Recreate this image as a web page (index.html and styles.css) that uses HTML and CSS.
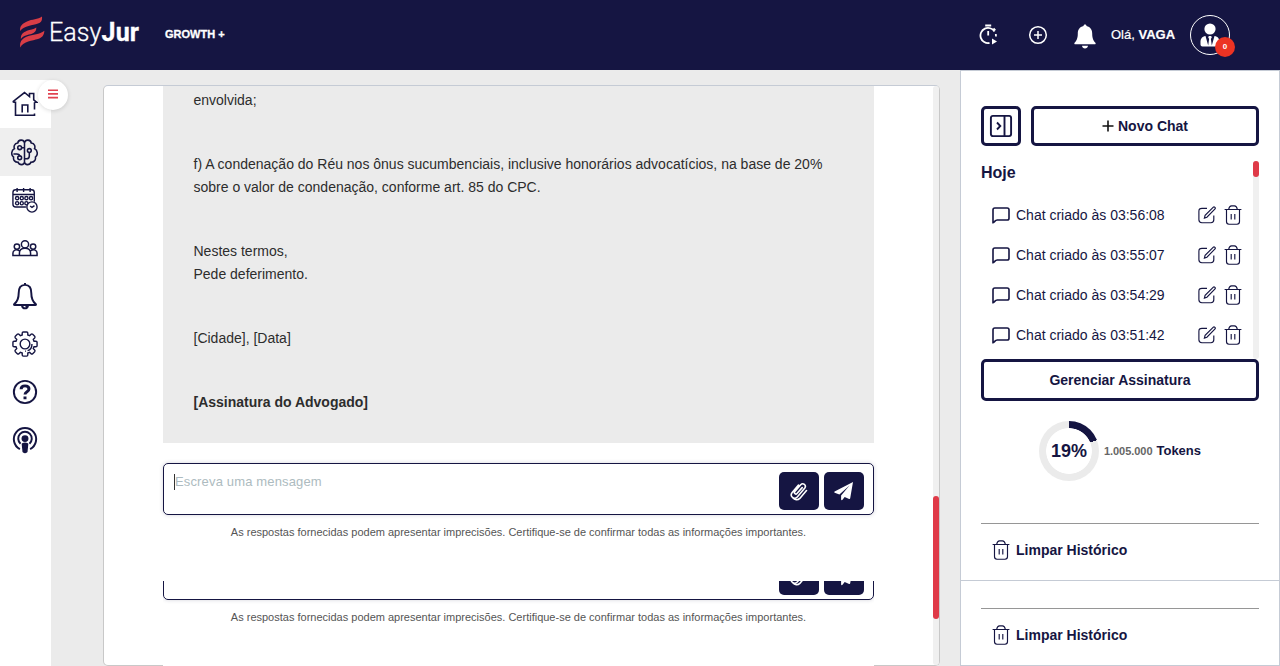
FILE: index.html
```html
<!DOCTYPE html>
<html lang="pt-BR">
<head>
<meta charset="utf-8">
<title>EasyJur</title>
<link rel="stylesheet" href="styles.css">
</head>
<body>
<svg class="defs" width="0" height="0">
  <defs>
    <symbol id="trash" viewBox="0 0 18 20"><path d="M.6 4.500h16.800M4.600 4.500C5.200 1.800 6 .8 7.500 .8h3c1.500 0 2.300 1 2.900 3.700M2.500 4.800v11.700c0 1.900.7 2.700 2.500 2.700h8c1.800 0 2.500-.8 2.500-2.700V4.800M7.200 9v5.500M10.800 9v5.500"/></symbol>
    <symbol id="edit" viewBox="0 0 18 18"><path d="M9 2.300H4C1.800 2.300.9 3.100.9 5.300v8.500c0 2.100.9 2.900 3 2.900h9c2.100 0 2.900-.8 2.900-2.900V9.500"/><path class="pen" d="M6.400 12.100l.7-2.800 8-8c.6-.6 1.300-.5 1.800 0s.5 1.200-.1 1.800l-7.900 8.100z"/></symbol>
    <symbol id="bubble" viewBox="0 0 18 17"><path d="M1 15.700V2.800C1 1.700 1.700 1 2.800 1h12.400c1.100 0 1.800.7 1.800 1.800v8.400c0 1.100-.7 1.800-1.800 1.800H5.200c-1.100 0-1.800.6-2.500 1.400-.5.600-1 1.200-1.700 1.300z"/></symbol>
    <symbol id="clip" viewBox="0 0 18 20"><path d="M12.200 6.600L7 12.500c-1.200 1.400-3.400-.3-2.300-1.800l6-6.900c2.300-2.500 6 .4 4.100 3.200l-7.300 8.700c-3.400 3.700-8.200-.3-5.300-4.200L8.500 4M16.500 9.500l-6.700 7.900C7.600 19.500 4.500 18.800 3 17"/></symbol>
    <symbol id="plane" viewBox="0 0 20 20"><path d="M19 1L.6 10.500c-.5.400-.4.900.1 1.200l4.700 1.900L15.500 4.500 7.100 14.600v3.700c0 .9.9 1.100 1.400.5l2.200-2.700 4.400 1.800c.6.200 1-.1 1.100-.6z"/></symbol>
  </defs>
</svg>

<header class="topbar">
  <div class="brand">
    <svg class="brand-mark" width="25" height="32" viewBox="0 0 25 32"><path d="M.2 15C-.5 10 2.500 7.500 7 5.500 12 3.300 18 3.500 22 .6c.4 3.800-.7 5.700-4 7C12.500 9.800 4.500 9.500.2 15zM.9 23C.5 18.500 3 16.500 7 14.700c3-1.300 6.500-1 9.300-3.200.2 3.200-1.300 5.200-4.300 6.200C8 19 3.500 19 .9 23zM.3 31.500C-.7 26 2 22.500 7 20.500c6-2.400 12.500-1.800 17.400-5.800-.3 4.600-2.400 7-6.400 8.300C12.500 24.800 3.500 25 .3 31.500z"/></svg>
    <span class="brand-name">Easy<b>Jur</b></span>
  </div>
  <span class="plan">GROWTH +</span>
  <div class="top-actions">
    <svg class="timer" width="20" height="22" viewBox="0 0 20 22"><path d="M6.200 1.500h6M15.500 7.500A7.600 7.600 0 1 0 10.500 19M9.200 7v4.500M14.500 4.500l1.800 1.800M16.800 10l.2 2.500"/><path class="solid" d="M13 14.500l5 3-5 3z"/></svg>
    <svg class="add" width="20" height="20" viewBox="0 0 20 20"><circle cx="10" cy="10" r="8.300"/><path d="M10 6v8M6 10h8"/></svg>
    <svg class="bell" width="22" height="25" viewBox="0 0 22 25"><path d="M11 .5c-1 0-1.500.7-1.500 1.600C5.600 3 3.800 5.700 3.800 9.600c0 5-1.300 7.300-3.200 9.200-.6.800-.2 1.500.7 1.500h19.400c.9 0 1.300-.7.700-1.500-1.900-1.900-3.200-4.200-3.200-9.200 0-3.900-1.800-6.600-5.700-7.500 0-.9-.5-1.600-1.500-1.600zM8 21.700h6c-.3 1.800-1.400 2.800-3 2.800s-2.700-1-3-2.800z"/></svg>
    <span class="hello">Olá, <b>VAGA</b></span>
    <div class="avatar">
      <svg width="20" height="24" viewBox="0 0 20 24"><circle cx="10" cy="6" r="5.600"/><path d="M5.500 13C2 13.500.5 16 .5 19v2.500c0 1.200.8 2 2 2h15c1.200 0 2-.8 2-2V19c0-3-1.500-5.500-5-6l-2.700 9.500-.9-6.500 1-2-1-1H9.100l-1 1 1 2-.9 6.500z"/></svg>
      <span class="badge">0</span>
    </div>
  </div>
</header>

<div class="workspace">
  <nav class="sidebar">
    <a class="nav-item"><svg width="26" height="26" viewBox="0 0 26 26"><path d="M1.300 11.500v-1.200L12.500 1.500l5 4V2.500h4.200v6.300l3.200 2.500h-2.400M1.300 11.300h2.200v13H22.500V22.500M22.500 18.500v-7.200M10.200 21.500v-7.500h5.600v7.500"/></svg></a>
    <a class="nav-item active"><svg width="28" height="28" viewBox="0 0 28 28"><path d="M14 4v20M14 4C13-.2 7.500.6 7 4.200 3.300 4.600 2.700 8.100 3.600 10-.2 12.100.1 17 2.700 18.700 2 22 4.400 24.200 7.200 24c1.500 3.600 6.300 3.300 6.800 0M14 4c1-4.200 6.500-3.400 7 .2 3.700.4 4.300 3.900 3.400 5.800 3.800 2.100 3.500 7 .9 8.700.7 3.300-1.700 5.500-4.500 5.300-1.500 3.600-6.300 3.300-6.800 0M13.500 9H11M2.500 15.500H6c2 0 3 .7 3 2.500M14 20.500h2c2 0 3-1 3-3V14"/><circle cx="9" cy="9" r="2"/><circle cx="9" cy="19.500" r="2"/><circle cx="19" cy="12" r="2"/></svg></a>
    <a class="nav-item"><svg class="thin" width="28" height="28" viewBox="0 0 28 28"><path d="M1 8h23M15 21.500H4c-2 0-3-1-3-3V6c0-2 1-3 3-3h17c2 0 3 1 3 3v10M5.500 1v4.500M12.500 1v4.500M19.500 1v4.500"/><circle cx="5.500" cy="12" r="1.700"/><circle cx="10.500" cy="12" r="1.700"/><circle cx="15.500" cy="12" r="1.700"/><circle cx="20.500" cy="12" r="1.700"/><circle cx="5.500" cy="17.500" r="1.700"/><circle cx="10.500" cy="17.500" r="1.700"/><circle cx="15.500" cy="17.500" r="1.700"/><circle class="paper" cx="21.500" cy="21.500" r="5.500"/><path d="M19.500 20.500l2 1.500 2.700-2"/></svg></a>
    <a class="nav-item"><svg width="28" height="28" viewBox="0 0 28 28"><circle cx="14" cy="10" r="3.900"/><circle cx="5.300" cy="12.500" r="2.900"/><circle cx="22.700" cy="12.500" r="2.900"/><path d="M8 22V19.500c0-3 2.300-5.200 6-5.200s6 2.200 6 5.200V22zM8 17c-3.900-2.300-7-.5-7 2.500V22h7M20 17c3.900-2.300 7-.5 7 2.500V22h-7"/></svg></a>
    <a class="nav-item"><svg class="bold" width="28" height="28" viewBox="0 0 28 28"><path d="M14 2c-5 0-6.800 3.500-6.800 9 0 6-1.500 9-4.700 11.700-.6.500-.4 1 .3 1h22.400c.7 0 .9-.5.3-1C22.300 20 20.800 17 20.800 11c0-5.500-1.800-9-6.800-9zM10.800 24.500c.4 2 1.500 2.800 3.200 2.800s2.800-.8 3.200-2.800M14 0v2M14.500 25.500h2"/></svg></a>
    <a class="nav-item"><svg class="thin" width="28" height="28" viewBox="0 0 28 28"><path d="M11 4.300V2.200Q11 1 12.200 1h3.600Q17 1 17 2.200v2.100l2 .8 1.500-1.500q.9-.8 1.800 0l2.100 2.100q.8.900 0 1.800L22.900 9l.8 2h2.100q1.200 0 1.200 1.200v3.600q0 1.200-1.200 1.200h-2.100l-.8 2 1.500 1.500q.8.900 0 1.800l-2.100 2.100q-.9.800-1.800 0L19 22.900l-2 .8v2.100q0 1.200-1.200 1.200h-3.600Q11 27 11 25.800v-2.100l-2-.8-1.500 1.500q-.9.800-1.800 0l-2.100-2.100q-.8-.9 0-1.800L5.100 19l-.8-2H2.200Q1 17 1 15.800v-3.600Q1 11 2.200 11h2.100l.8-2-1.500-1.500q-.8-.9 0-1.800l2.100-2.100q.9-.8 1.800 0L9 5.100z"/><circle cx="14" cy="14" r="5.200"/><path d="M21.500 14c0 4-2 6.500-4.700 7.200M15 21.700h-1"/></svg></a>
    <a class="nav-item"><svg class="bold" width="28" height="28" viewBox="0 0 28 28"><circle cx="14" cy="14" r="12"/><path class="heavy" d="M9.800 11c0-2.300 1.700-3.600 4.200-3.600s4.300 1.300 4.300 3.400c0 3-4.300 2.800-4.300 5.900M14 18.800v3"/></svg></a>
    <a class="nav-item"><svg class="bold" width="28" height="28" viewBox="0 0 28 28"><path d="M8.500 23.800a12 12 0 1 1 11 0M9.200 18a7.300 7.300 0 1 1 9.600 0"/><circle class="fill" cx="14" cy="12.500" r="2.700"/><path class="fill" d="M11.500 18.500q2.500-1.500 5 0l-.8 8q-1.700 1.500-3.400 0z"/></svg></a>
    <button class="menu-toggle"><svg width="12" height="10" viewBox="0 0 12 10"><path d="M1 1.200h10M1 4.900h10M1 8.600h10"/></svg></button>
  </nav>

  <main class="chat">
    <div class="conversation">
      <article class="message">
        <p>envolvida;</p>
        <p>f) A condenação do Réu nos ônus sucumbenciais, inclusive honorários advocatícios, na base de 20%<br>sobre o valor de condenação, conforme art. 85 do CPC.</p>
        <p>Nestes termos,<br>Pede deferimento.</p>
        <p>[Cidade], [Data]</p>
        <p><b>[Assinatura do Advogado]</b></p>
      </article>
      <section class="composer">
        <div class="input-box"><span class="placeholder">Escreva uma mensagem</span>
          <button class="send"><svg class="clip" width="18" height="20"><use href="#clip"/></svg></button>
          <button class="send"><svg class="plane" width="20" height="20"><use href="#plane"/></svg></button>
        </div>
        <p class="notice">As respostas fornecidas podem apresentar imprecisões. Certifique-se de confirmar todas as informações importantes.</p>
      </section>
      <section class="composer repeat">
        <div class="input-box">
          <button class="send"><svg class="clip" width="18" height="20"><use href="#clip"/></svg></button>
          <button class="send"><svg class="plane" width="20" height="20"><use href="#plane"/></svg></button>
        </div>
        <p class="notice">As respostas fornecidas podem apresentar imprecisões. Certifique-se de confirmar todas as informações importantes.</p>
      </section>
    </div>
    <div class="scroll"><div class="thumb"></div></div>
  </main>

  <aside class="history">
    <div class="new-row">
      <button class="box collapse"><svg width="24" height="24" viewBox="0 0 24 24"><rect x="1.900" y="1.900" width="20.200" height="20.200" rx="2"/><path d="M15.500 2v20M8 8.500l3.300 3.500L8 15.500"/></svg></button>
      <button class="box new-chat"><svg width="12" height="12" viewBox="0 0 12 12"><path d="M6 .5v11M.5 6h11"/></svg><span>Novo Chat</span></button>
    </div>
    <div class="list">
      <div class="list-body">
        <h2>Hoje</h2>
        <div class="row"><svg class="line" width="18" height="17"><use href="#bubble"/></svg><span>Chat criado às 03:56:08</span><svg class="light" width="18" height="18"><use href="#edit"/></svg><svg class="light" width="18" height="20"><use href="#trash"/></svg></div>
        <div class="row"><svg class="line" width="18" height="17"><use href="#bubble"/></svg><span>Chat criado às 03:55:07</span><svg class="light" width="18" height="18"><use href="#edit"/></svg><svg class="light" width="18" height="20"><use href="#trash"/></svg></div>
        <div class="row"><svg class="line" width="18" height="17"><use href="#bubble"/></svg><span>Chat criado às 03:54:29</span><svg class="light" width="18" height="18"><use href="#edit"/></svg><svg class="light" width="18" height="20"><use href="#trash"/></svg></div>
        <div class="row"><svg class="line" width="18" height="17"><use href="#bubble"/></svg><span>Chat criado às 03:51:42</span><svg class="light" width="18" height="18"><use href="#edit"/></svg><svg class="light" width="18" height="20"><use href="#trash"/></svg></div>
      </div>
      <div class="scroll"><div class="thumb small"></div></div>
    </div>
    <button class="box manage">Gerenciar Assinatura</button>
    <div class="usage">
      <div class="ring"><span>19%</span></div>
      <span class="amount">1.005.000</span><b class="unit">Tokens</b>
    </div>
    <div class="clear first"><svg class="light" width="18" height="20"><use href="#trash"/></svg><span>Limpar Histórico</span></div>
    <div class="clear-panel">
      <div class="clear"><svg class="light" width="18" height="20"><use href="#trash"/></svg><span>Limpar Histórico</span></div>
    </div>
  </aside>
</div>
</body>
</html>
```

FILE: styles.css
```css
* { box-sizing: border-box; }
body { margin: 0; width: 1280px; height: 666px; overflow: hidden; background: #ebebeb; color: #151542; font: 14px/22.4px "Liberation Sans", Arial, sans-serif; display: flex; flex-direction: column; }
p, h2 { margin: 0; }
button { font: inherit; color: inherit; padding: 0; }
svg { display: block; flex: none; fill: none; stroke: #151542; }
.defs { position: absolute; }

.topbar { flex: 0 0 70px; background: #151542; color: #fff; display: flex; align-items: center; padding: 0 50px 0 20px; }
.brand { display: flex; align-items: center; width: 145px; gap: 4px; }
.brand-mark { fill: #d83d46; stroke: none; margin-top: -6px; }
.brand-name { font: 25px/30px Roboto, sans-serif; font-weight: 300; letter-spacing: 0.100px; margin-top: -4px; -webkit-text-stroke: 0.300px #fff; }
.brand-name b { font-weight: 700; }
.plan { font-size: 11px; font-weight: 700; margin-top: -2px; -webkit-text-stroke: 0.300px #fff; }
.top-actions { margin-left: auto; display: flex; align-items: center; }
.timer { stroke: #fff; stroke-width: 1.800; margin-right: 29px; }
.solid { fill: #fff; stroke: none; }
.add { stroke: #fff; stroke-width: 1.500; margin-right: 26px; }
.bell { fill: #fff; stroke: none; margin-right: 15px; margin-top: 2px; }
.hello { font-size: 13px; width: 79px; white-space: nowrap; -webkit-text-stroke: 0.200px #fff; }
.avatar { position: relative; width: 40px; height: 40px; border: 1px solid #fff; border-radius: 50%; display: flex; justify-content: center; align-items: center; }
.avatar svg { fill: #fff; stroke: none; }
.badge { position: absolute; left: 24px; top: 21px; width: 20px; height: 20px; border-radius: 50%; background: #ec3323; text-align: center; font: bold 8px/19px "Liberation Sans", sans-serif; }

.workspace { flex: 1; display: flex; min-height: 0; }
.sidebar { position: relative; width: 51px; margin-top: 10px; background: #fff; }
.nav-item { height: 48px; display: flex; align-items: center; justify-content: center; padding-right: 2px; }
.nav-item svg { stroke-width: 1.600; width: 26px; height: 26px; }
.nav-item.active { background: #efefef; }
.nav-item.active svg { width: 27px; height: 27px; }
.nav-item svg.thin { stroke-width: 1.500; }
.nav-item svg.bold { stroke-width: 2.100; overflow: visible; }
.nav-item .heavy { stroke-width: 3.200; }
.nav-item .fill { fill: #151542; }
.nav-item .paper { fill: #fff; }
.menu-toggle { position: absolute; left: 38px; top: 0; width: 30px; height: 30px; border: 0; border-radius: 50%; background: #fff; box-shadow: 0 1px 4px rgba(0,0,0,.14); display: flex; align-items: center; justify-content: center; }
.menu-toggle svg { stroke: #e14351; stroke-width: 1.600; margin-top: -2px; }

.chat { width: 837px; margin: 15px 20px 0 52px; background: #fff; border: 1px solid #c8c8c8; border-top-color: #c5cbd5; border-radius: 5px; display: flex; }
.conversation { width: 711px; margin: 0 59px; display: flex; flex-direction: column; }
.message { height: 357px; flex: none; overflow: hidden; background: #ebebeb; padding: 0 30px 29.200px 30.500px; color: #2d2d2d; display: flex; flex-direction: column; justify-content: flex-end; gap: 42px; white-space: nowrap; }
.composer { height: 138px; flex: none; padding-top: 20px; background: #fff; }
.input-box { height: 52px; border: 1px solid #151542; border-radius: 5px; box-shadow: 0 0 4px rgba(21,21,66,.18); display: flex; justify-content: flex-end; gap: 5px; padding: 8px 9px; }
.placeholder { margin-right: auto; margin-left: 1px; height: 16px; margin-top: 2px; border-left: 1px solid #333; color: #adbbc0; font-size: 13px; line-height: 15px; letter-spacing: 0.150px; }
.send { width: 40px; height: 38px; border: 0; border-radius: 5px; background: #151542; display: flex; align-items: center; justify-content: center; }
.clip { stroke: #fff; stroke-width: 1.600; stroke-linecap: round; }
.plane { fill: #fff; stroke: none; }
.notice { text-align: center; color: #555; font-size: 11px; line-height: 16px; margin-top: 9px; white-space: nowrap; }
.repeat { height: 85px; overflow: hidden; padding: 0; display: flex; flex-direction: column; justify-content: flex-end; padding-bottom: 41px; }
.repeat .input-box { flex: none; }
.scroll { width: 6px; flex: none; background: #f0f0f0; border-radius: 3px; }
.thumb { width: 6px; height: 123px; margin-top: 410px; border-radius: 3px; background: #df3a48; }
.thumb.small { height: 16px; margin-top: 0; }

.history { width: 320px; background: #fff; border: 1px solid #c5cbd5; padding: 35px 20px 0; display: flex; flex-direction: column; }
.box { border: 3px solid #151542; border-radius: 5px; background: #fff; font-weight: 700; display: flex; align-items: center; justify-content: center; }
.new-row { display: flex; gap: 10px; height: 40px; flex: none; }
.collapse { width: 40px; }
.collapse svg { stroke-width: 1.900; }
.new-chat { flex: 1; gap: 4px; }
.new-chat svg { stroke: #111; stroke-width: 1.600; }
.list { display: flex; height: 198px; margin-top: 15px; flex: none; }
.list-body { flex: 1; overflow: hidden; }
h2 { font-size: 16px; line-height: 24px; height: 34px; }
.row { height: 40px; display: flex; align-items: center; padding: 0 11px; gap: 8px; }
.row span { width: 174px; margin-left: -2px; white-space: nowrap; }
.line { stroke-width: 1.600; }
.light { stroke-width: 1.150; margin-top: -1px; }
.manage { height: 42px; flex: none; }
.usage { height: 60px; margin-top: 20px; display: flex; align-items: center; justify-content: center; flex: none; }
.ring { width: 60px; height: 60px; border-radius: 50%; background: radial-gradient(circle, #fff 0 22.500px, transparent 23.200px), conic-gradient(#151542 19%, #ebebeb 0); display: flex; align-items: center; justify-content: center; font-size: 18px; font-weight: 700; margin-right: 5px; }
.amount { font-size: 11px; font-weight: 700; color: #666; letter-spacing: -0.050px; }
.unit { font-size: 13px; margin-left: 4px; }
.clear { height: 58px; border-top: 1px solid #969696; display: flex; align-items: center; font-weight: 700; padding: 0 0 4px 10.500px; gap: 6.500px; flex: none; }
.first { margin-top: 42px; }
.clear-panel { flex: 1; margin: -1px -20px 0; border-top: 1px solid #c5cbd5; padding: 27px 20px 0; }
```
